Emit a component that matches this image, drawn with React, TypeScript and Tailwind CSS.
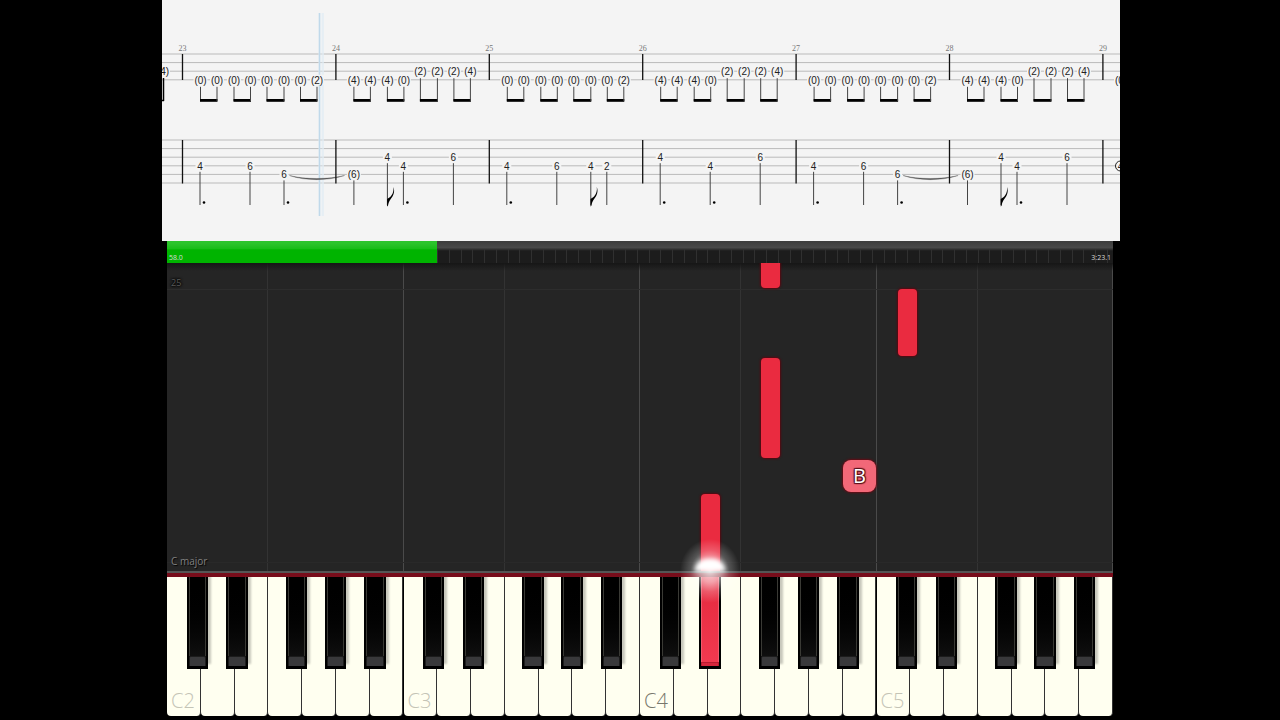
import { clsx } from 'clsx';

type TabNote = { x: number; string: number; label: string };
type BassNote = TabNote & { dotted?: boolean; flag?: boolean };
type FallingNote = { left: number; top: number; width: number; height: number };

const BAR_WIDTH = 153.4;
const FIRST_BAR = 20.5;
const STRING_GAP = 8.6;
const TOP_STAFF = 54;
const BOTTOM_STAFF = 140;
const BARS = [23, 24, 25, 26, 27, 28, 29];
const BEATS = [18, 34.5, 51.5, 68, 84.5, 101.5, 118, 134.5];

const LOW_RIFF: TabNote[] = ['(0)', '(0)', '(0)', '(0)', '(0)', '(0)', '(0)', '(2)'].map(
  (label, i) => ({ x: BEATS[i], string: 3, label }),
);
const HIGH_RIFF: TabNote[] = ['(4)', '(4)', '(4)', '(0)', '(2)', '(2)', '(2)', '(4)'].map(
  (label, i) => ({ x: BEATS[i], string: i < 4 ? 3 : 2, label }),
);

const PHRASE_A: BassNote[] = [
  { x: 17.5, string: 3, label: '4', dotted: true },
  { x: 67.5, string: 3, label: '6' },
  { x: 101.5, string: 4, label: '6', dotted: true },
];
const PHRASE_B: BassNote[] = [
  { x: 18, string: 4, label: '(6)' },
  { x: 51.5, string: 2, label: '4', flag: true },
  { x: 67.5, string: 3, label: '4', dotted: true },
  { x: 117.5, string: 2, label: '6' },
];
const PHRASE_C: BassNote[] = [
  { x: 17.5, string: 3, label: '4', dotted: true },
  { x: 67.5, string: 3, label: '6' },
  { x: 101.5, string: 3, label: '4', flag: true },
  { x: 117.5, string: 3, label: '2' },
];
const PHRASE_D: BassNote[] = [
  { x: 17.5, string: 2, label: '4', dotted: true },
  { x: 67.5, string: 3, label: '4', dotted: true },
  { x: 117.5, string: 2, label: '6' },
];
const PHRASES = [PHRASE_A, PHRASE_B, PHRASE_C, PHRASE_D, PHRASE_A, PHRASE_B];

// percentages of the roll
const FALLING_NOTES: FallingNote[] = [
  { left: 62.75, top: -3, width: 2, height: 11 },
  { left: 62.75, top: 30.7, width: 2, height: 32.7 },
  { left: 56.45, top: 75, width: 2, height: 26 },
  { left: 77.3, top: 8.6, width: 2, height: 21.5 },
];

const OCTAVES = [2, 3, 4, 5];
const WHITE_KEYS = ['C', 'D', 'E', 'F', 'G', 'A', 'B'];
const BLACK_KEYS = [
  { name: 'C#', left: 8.3 },
  { name: 'D#', left: 25.1 },
  { name: 'F#', left: 50.3 },
  { name: 'G#', left: 66.8 },
  { name: 'A#', left: 83.4 },
];

const Fret = ({ x, y, label }: { x: number; y: number; label: string }) => {
  const width = label.length > 1 ? 14 : 9;
  return (
    <>
      <rect x={x - width / 2} y={y - 5} width={width} height={10} fill="#f4f4f4" />
      <text x={x} y={y + 4} textAnchor="middle" fontSize={10} fill="#222">
        {label}
      </text>
    </>
  );
};

const TabBar = ({ notes }: { notes: TabNote[] }) => (
  <g>
    {notes.map((note, i) => {
      const y = TOP_STAFF + note.string * STRING_GAP;
      return (
        <g key={i}>
          <Fret x={note.x} y={y} label={note.label} />
          <path d={`M${note.x} ${y + 7}V101`} stroke="#444" />
          {i % 2 === 0 && (
            <rect x={note.x - 0.5} y={99} width={notes[i + 1].x - note.x + 1} height={2.8} fill="#000" />
          )}
        </g>
      );
    })}
  </g>
);

const BassBar = ({ notes }: { notes: BassNote[] }) => (
  <g>
    {notes.map((note, i) => {
      const y = BOTTOM_STAFF + note.string * STRING_GAP;
      return (
        <g key={i}>
          <Fret x={note.x} y={y} label={note.label} />
          <path d={`M${note.x} ${y + 6}V205`} stroke="#444" />
          {note.dotted && <circle cx={note.x + 4} cy={202.5} r={1.3} fill="#000" />}
          {note.flag && (
            <path
              d={`M${note.x - 0.3} 206.500v-7.500c3-1.500 7.200-5 6.300-12 1.700 4.500 .2 8.500-2.500 11.700-1.800 2.200-2.600 4.500-2.900 7z`}
              fill="#000"
            />
          )}
        </g>
      );
    })}
  </g>
);

const Score = () => (
  <svg
    viewBox="0 0 958 241"
    role="img"
    aria-label="Tablature"
    className="block w-full bg-[#f4f4f4] font-['Liberation_Sans',sans-serif]"
  >
    {[0, 1, 2, 3].map((n) => (
      <path key={n} d={`M0 ${TOP_STAFF + n * STRING_GAP}H958`} stroke="#bababa" />
    ))}
    {[0, 1, 2, 3, 4, 5].map((n) => (
      <path key={n} d={`M0 ${BOTTOM_STAFF + n * STRING_GAP}H958`} stroke="#bababa" />
    ))}
    <rect x={156} y={13} width={6} height={203} fill="#e6f1f8" opacity={0.4} />
    <path d="M157.500 13V216" stroke="#c0d9ea" strokeWidth={1.5} />
    <path d="M161 13V216" stroke="#dfebf3" />
    {BARS.map((bar, i) => (
      <g key={bar} transform={`translate(${FIRST_BAR + i * BAR_WIDTH} 0)`}>
        <path d="M0 54v26M0 140v43.500" stroke="#111" strokeWidth={1.3} />
        <text
          x={0}
          y={51}
          textAnchor="middle"
          fontSize={8}
          fill="#777"
          className="font-['Liberation_Serif',serif]"
        >
          {bar}
        </text>
        {i < 6 && <TabBar notes={i % 2 === 0 ? LOW_RIFF : HIGH_RIFF} />}
        {i < 6 && <BassBar notes={PHRASES[i]} />}
        {(i === 0 || i === 4) && (
          <path d="M107 175.500C122 181 146 181 162 175.500 146 179.500 122 179.500 107 175.500z" fill="#444" stroke="#666" strokeWidth={0.4} />
        )}
      </g>
    ))}
    <Fret x={1} y={71.2} label="(4)" />
    <path d="M1.500 78V101M0 100.400h2" stroke="#000" strokeWidth={1.5} />
    <Fret x={959} y={79.8} label="(0)" />
    <Fret x={958.5} y={165.8} label="4" />
    <circle cx={958.5} cy={166} r={5} fill="none" stroke="#222" />
  </svg>
);

const Timeline = () => (
  <div className="relative h-[22px] bg-linear-to-b from-[#3c3c3c] via-[#484848] via-30% to-[#1c1c1c] to-45%">
    <div className="absolute inset-x-0 top-2 bottom-0 bg-[repeating-linear-gradient(90deg,#303030_0_1px,transparent_1px_1.242%)]" />
    <div className="absolute inset-y-0 left-0 w-[28.5%] bg-linear-to-b from-[#2cc42c] from-10% via-[#18bd18] via-35% to-[#00b400] to-40%" />
    <div className="absolute inset-x-0 bottom-0 flex justify-between px-[2px] text-[7px] leading-[10px] text-[#d8d8d8]">
      <span>58.0</span>
      <span>3:23.1</span>
    </div>
  </div>
);

const PianoRoll = () => (
  <div className="relative flex min-h-[308px] flex-1 overflow-hidden bg-[#252525]">
    {OCTAVES.map((octave) => (
      <div
        key={octave}
        className="flex flex-1 border-r border-[#4a4a4a] last:border-r-transparent"
      >
        <div className="w-[43%] border-r border-[#333]" />
      </div>
    ))}
    <div className="absolute inset-x-0 top-0 h-2 bg-linear-to-b from-[#161616] to-transparent" />
    <div className="absolute inset-x-0 top-[8.4%] h-px bg-[#2d2d2d]" />
    <div className="absolute inset-x-0 top-[97%] h-px bg-[#292929]" />
    <span className="absolute top-[14px] left-1 text-[9px] leading-3 text-[#5a5a5a] [text-shadow:0_0_2px_#000,0_0_2px_#000,0_0_3px_#000]">
      25
    </span>
    <span className="absolute bottom-1 left-1 text-[10px] leading-3 text-[#808080] [text-shadow:1px_1px_1px_#000]">
      C major
    </span>
    {FALLING_NOTES.map((note, i) => (
      <div
        key={i}
        className="absolute rounded-[4px] bg-[#ea2b40] shadow-[0_0_2px_1px_#5a0710]"
        style={{
          left: `${note.left}%`,
          top: `${note.top}%`,
          width: `${note.width}%`,
          height: `${note.height}%`,
        }}
      />
    ))}
    <div className="absolute top-[64%] left-[71.5%] flex h-8 w-[3.4%] items-center justify-center rounded-lg bg-[#f26878] text-xl text-white shadow-[0_0_2px_1px_#6a0a14] [text-shadow:1px_1px_1px_#5a1018,-1px_-1px_1px_#5a1018,1px_-1px_1px_#5a1018,-1px_1px_1px_#5a1018]">
      B
    </div>
  </div>
);

const BlackKey = ({ name, left, active }: { name: string; left: number; active: boolean }) => (
  <button
    type="button"
    aria-label={name}
    aria-pressed={active}
    className={clsx(
      'absolute top-0 flex h-[92px] w-[9%] flex-col justify-end border-x-2 border-b-3 border-black',
      active
        ? 'bg-linear-to-b from-[#e4283d] to-[#f23a50]'
        : 'bg-linear-to-b from-black to-[#141414] shadow-[3px_-5px_2px_#c8c8bc]',
    )}
    style={{ left: `${left}%` }}
  >
    <span
      className={clsx(
        'flex w-full flex-1 border-x',
        active ? 'border-[#f2596c]' : 'border-[#3a3a35]',
      )}
    />
    <span
      className={clsx(
        'w-full border-x border-t',
        active
          ? 'h-1 border-[#b81c30] bg-[#d6263c]'
          : 'h-[10px] rounded-t-xs border-[#1c1c1c] bg-[#39393b]',
      )}
    />
  </button>
);

const Keyboard = () => (
  <div className="relative bg-black pb-1">
    <div className="h-[2px] bg-[#555]" />
    <div className="h-1 bg-[#780d1b]" />
    <div className="flex h-[139px] overflow-hidden">
      {OCTAVES.map((octave) => (
        <div key={octave} className="relative flex flex-1">
          {WHITE_KEYS.map((name) => (
            <button
              key={name}
              type="button"
              aria-label={`${name}${octave}`}
              className="flex flex-1 items-end rounded-b-[4px] border-r border-[#333] bg-[#fffff0] pb-[3px] pl-1"
            >
              {name === 'C' && (
                <span
                  className={clsx(
                    'text-xl leading-6 font-light',
                    octave === 4 ? 'text-[#77776c]' : 'text-[#c4c4b6]',
                  )}
                >
                  {`C${octave}`}
                </span>
              )}
            </button>
          ))}
          {BLACK_KEYS.map((key) => (
            <BlackKey
              key={key.name}
              name={`${key.name}${octave}`}
              left={key.left}
              active={octave === 4 && key.name === 'D#'}
            />
          ))}
        </div>
      ))}
    </div>
    {/* glow where the sounding note meets the keys */}
    <div className="pointer-events-none absolute -top-8 left-[54.2%] h-16 w-[6.4%] bg-[radial-gradient(closest-side,#ffffffd0,#ffffff90_35%,#ffffff38_65%,transparent)]" />
    <div className="pointer-events-none absolute -top-3 left-[55.8%] h-3 w-[3.2%] rounded-t-full bg-white blur-[2px]" />
  </div>
);

export default function App() {
  return (
    <main className="flex min-h-screen flex-col bg-black pr-[160px] pl-[162px] font-['Open_Sans','Noto_Sans',sans-serif]">
      <Score />
      <section aria-label="Piano" className="flex flex-1 flex-col pr-[7px] pl-[5px]">
        <Timeline />
        <PianoRoll />
        <Keyboard />
      </section>
    </main>
  );
}
